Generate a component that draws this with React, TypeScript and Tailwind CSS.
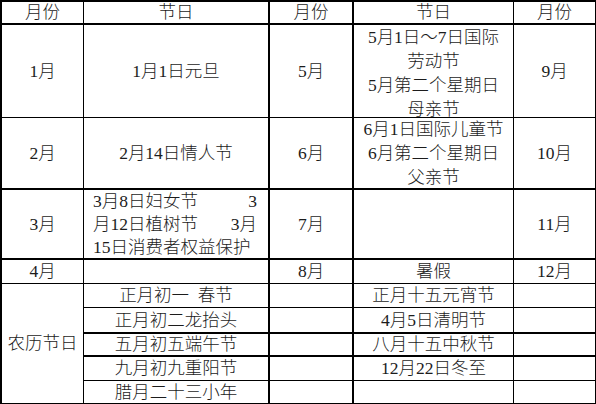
const COL_BORDER = ["border-r", "border-r-2", "border-r-2", "border-r", "border-r"];

type Row = {
  h: string;
  bottom: string;
  cells: (React.ReactNode | null)[];
};

const ROWS: Row[] = [
  { h: "h-[23px]", bottom: "border-b-2", cells: ["月份", "节日", "月份", "节日", "月份"] },
  {
    h: "h-[93px]",
    bottom: "border-b",
    cells: [
      "1月",
      "1月1日元旦",
      "5月",
      <div className="pt-[3px] leading-[24px]">
        5月1日～7日国际
        <br />
        劳动节
        <br />
        5月第二个星期日
        <br />
        母亲节
      </div>,
      "9月",
    ],
  },
  {
    h: "h-[72px]",
    bottom: "border-b-2",
    cells: [
      "2月",
      "2月14日情人节",
      "6月",
      <div className="leading-[24px]">
        6月1日国际儿童节
        <br />
        6月第二个星期日
        <br />
        父亲节
      </div>,
      "10月",
    ],
  },
  {
    h: "h-[70px]",
    bottom: "border-b-2",
    cells: [
      "3月",
      <div className="flex w-full flex-col pl-[9px] pr-[11px]">
        <div className="flex justify-between">
          <span>3月8日妇女节</span>
          <span>3</span>
        </div>
        <div className="flex justify-between">
          <span>月12日植树节</span>
          <span>3月</span>
        </div>
        <div className="flex justify-between">
          <span>15日消费者权益保护</span>
        </div>
      </div>,
      "7月",
      "",
      "11月",
    ],
  },
  { h: "h-[24px]", bottom: "border-b", cells: ["4月", "", "8月", "暑假", "12月"] },
];

const LUNAR = [
  { h: "h-[24px]", bottom: "border-b", a: "正月初一\u2002春节", b: "正月十五元宵节" },
  { h: "h-[26px]", bottom: "border-b-2", a: "正月初二龙抬头", b: "4月5日清明节" },
  { h: "h-[23px]", bottom: "border-b-2", a: "五月初五端午节", b: "八月十五中秋节" },
  { h: "h-[24px]", bottom: "border-b", a: "九月初九重阳节", b: "12月22日冬至" },
  { h: "h-[23px]", bottom: "border-b", a: "腊月二十三小年", b: "" },
];

function Cell({
  className,
  children,
}: {
  className: string;
  children?: React.ReactNode;
}) {
  return (
    <div
      className={`flex items-center justify-center overflow-hidden whitespace-nowrap border-black text-center ${className}`}
    >
      {children}
    </div>
  );
}

export default function App() {
  return (
    <div
      className="grid h-[404px] w-[596px] grid-cols-[82px_186px_84px_160px_82px] border-l-2 border-t-2 border-black bg-white text-[17.5px] font-light leading-[23px] text-[#1c1c1c]"
      style={{ fontFamily: '"Liberation Serif", "Noto Sans CJK SC", serif' }}
    >
      {ROWS.map((row, ri) =>
        row.cells.map((c, ci) => (
          <Cell key={`${ri}-${ci}`} className={`${row.h} ${row.bottom} ${COL_BORDER[ci]}`}>
            {c}
          </Cell>
        )),
      )}
      <Cell className="row-span-5 border-b border-r">农历节日</Cell>
      {LUNAR.map((r, i) => (
        <div key={i} className="contents">
          <Cell className={`${r.h} ${r.bottom} border-r-2`}>{r.a}</Cell>
          <Cell className={`${r.h} ${r.bottom} border-r-2`}></Cell>
          <Cell className={`${r.h} ${r.bottom} border-r`}>{r.b}</Cell>
          <Cell className={`${r.h} ${r.bottom} border-r`}></Cell>
        </div>
      ))}
    </div>
  );
}
